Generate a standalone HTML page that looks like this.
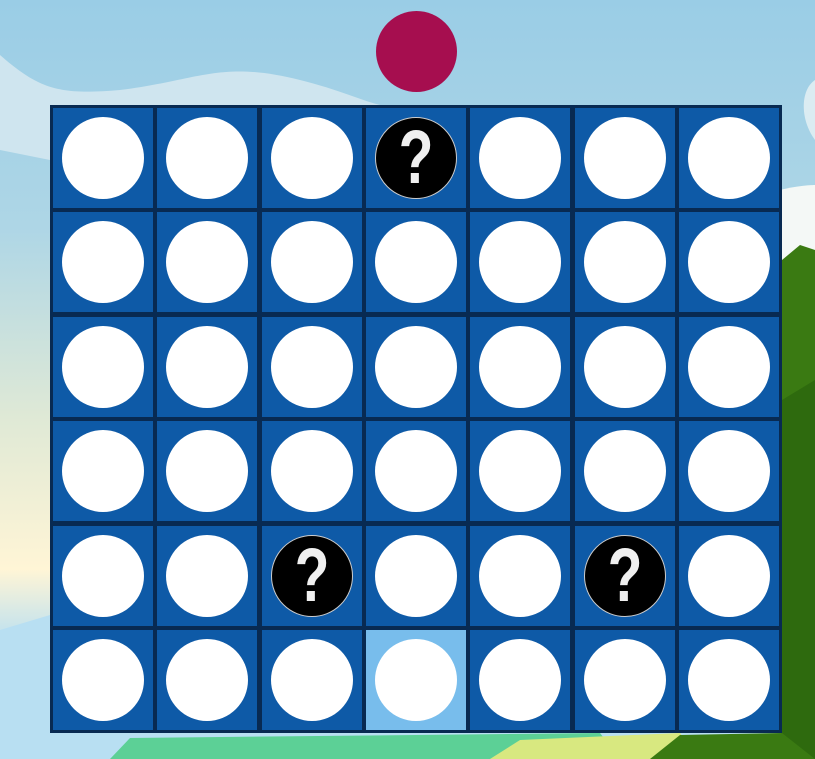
<!DOCTYPE html>
<html><head><style>
html,body{margin:0;padding:0;width:815px;height:759px;overflow:hidden}
body{position:relative;background:linear-gradient(#9acde6 0%,#aed6e6 30%,#dfe9d6 55%,#fff5d6 75%,#b8dff2 85%)}
#bg{position:absolute;left:0;top:0}
#disc{position:absolute;left:376px;top:11px;width:81px;height:81px;border-radius:50%;background:#a60e4f}
#board{position:absolute;left:50px;top:105px;width:732px;height:628px;background:#082a52;box-sizing:border-box;padding:3px;display:grid;grid-template-columns:repeat(7,1fr);grid-template-rows:repeat(6,1fr);gap:4.5px}
.c{background:#0e5aa7;position:relative}
.c.h{background:#78bdec}
.c::after{content:"";position:absolute;left:9px;top:9px;width:82px;height:82px;border-radius:50%;background:#fff}
.c.q::after{display:none}
.q span{position:absolute;left:9px;top:9px;width:80px;height:80px;border-radius:50%;background:#000;border:1px solid #ccc;overflow:hidden}
.q span b{position:absolute;left:0;right:0;top:2px;text-align:center;color:#f0f0f0;font:bold 76px/76px "Liberation Sans Narrow","Liberation Sans",sans-serif;transform:scaleX(0.75)}
</style></head><body>
<svg id="bg" width="815" height="759">
<path d="M0 55 C40 90 60 95 120 90 C200 80 220 60 300 80 C340 90 360 100 380 105 L0 105Z" fill="#cfe5ef"/>
<path d="M0 105 L50 105 L50 160 L0 150Z" fill="#cfe5ef"/>
<path d="M780 190 C800 185 815 185 815 185 L815 759 L780 759Z" fill="#f4f8f6"/>
<path d="M815 80 C800 90 800 120 815 140Z" fill="#dbecf2"/>
<path d="M782 260 L800 245 L815 250 L815 759 L782 759Z" fill="#3a7a12"/>
<path d="M782 400 L815 380 L815 759 L782 759Z" fill="#2e6a0e"/>
<path d="M0 630 L50 615 L50 759 L0 759Z" fill="#b8dff2"/>
<path d="M110 759 L130 738 L600 733 L620 759Z" fill="#5cd096"/>
<path d="M490 759 L520 740 L680 733 L700 759Z" fill="#d8e880"/>
<path d="M650 759 L680 735 L782 733 L815 759Z" fill="#3a7a12"/>
</svg>
<div id="disc"></div>
<div id="board">
<div class="c"></div><div class="c"></div><div class="c"></div><div class="c q"><span><b>?</b></span></div><div class="c"></div><div class="c"></div><div class="c"></div>
<div class="c"></div><div class="c"></div><div class="c"></div><div class="c"></div><div class="c"></div><div class="c"></div><div class="c"></div>
<div class="c"></div><div class="c"></div><div class="c"></div><div class="c"></div><div class="c"></div><div class="c"></div><div class="c"></div>
<div class="c"></div><div class="c"></div><div class="c"></div><div class="c"></div><div class="c"></div><div class="c"></div><div class="c"></div>
<div class="c"></div><div class="c"></div><div class="c q"><span><b>?</b></span></div><div class="c"></div><div class="c"></div><div class="c q"><span><b>?</b></span></div><div class="c"></div>
<div class="c"></div><div class="c"></div><div class="c"></div><div class="c h"></div><div class="c"></div><div class="c"></div><div class="c"></div>
</div>
</body></html>
